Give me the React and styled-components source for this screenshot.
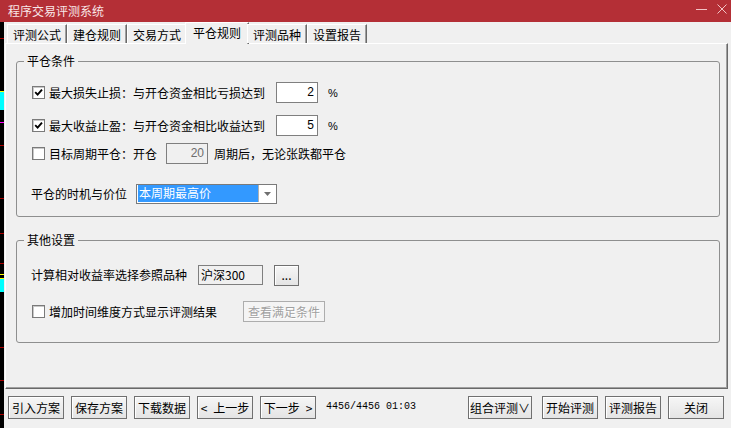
import React from 'react';
import styled, { createGlobalStyle } from 'styled-components';

const GlobalStyle = createGlobalStyle`
  html, body {
    margin: 0;
    padding: 0;
    background: #f0f0f0;
  }
  body {
    font-family: "Noto Sans CJK SC", "Noto Sans", sans-serif;
    font-size: 12px;
    color: #000;
  }
  * {
    box-sizing: border-box;
  }
`

const Window = styled.div`
  width: 731px;
  height: 428px;
  display: flex;
  flex-direction: column;
  overflow: hidden;
  background: #f0f0f0;
`

const TitleBar = styled.div`
  height: 22px;
  flex: none;
  display: flex;
  align-items: center;
  padding: 0 4px 0 8px;
  background: #b42f36;
`

const Title = styled.div`
  color: #f8e6e7;
  font-size: 12px;
  line-height: 16px;
`

const WinButtons = styled.div`
  margin-left: auto;
  display: flex;
  gap: 10px;
`

const Body = styled.div`
  flex: 1;
  display: flex;
`

// chart remnants peeking out from behind the dialog
const Strip = styled.div`
  width: 4px;
  flex: none;
  background: linear-gradient(
    #000 0, #000 16px, #a00 16px, #a00 17px, #000 17px,
    #000 69px, #ff0 69px, #ff0 70px, #0ff 70px, #0ff 88px, #000 88px,
    #000 100px, #f0f 100px, #f0f 101px, #000 101px,
    #000 123px, #a00 123px, #a00 124px, #000 124px,
    #000 176px, #a00 176px, #a00 177px, #000 177px,
    #000 211px, #a00 211px, #a00 212px, #000 212px,
    #000 241px, #a00 241px, #a00 242px, #000 242px,
    #000 252px, #ff0 252px, #ff0 253px, #000 253px,
    #000 256px, #ff0 256px, #ff0 257px, #0ff 257px, #0ff 270px, #000 270px,
    #000 325px, #a00 325px, #a00 326px, #000 326px,
    #000 358px, #a00 358px, #a00 359px, #000 359px,
    #000 392px, #a00 392px, #a00 393px, #000 393px
  );
`

const Main = styled.div`
  flex: 1;
  display: flex;
  flex-direction: column;
  min-width: 0;
`

const TabBar = styled.div`
  height: 21px;
  flex: none;
  display: flex;
  align-items: flex-end;
  padding-left: 3px;
  position: relative;
  z-index: 1;
`

const Tab = styled.div`
  width: ${p => (p.$active ? 64 : 60)}px;
  height: ${p => (p.$active ? 22 : 19)}px;
  margin: ${p => (p.$active ? '0 -2px -1px -2px' : '0')};
  padding: 2px 0 0 ${p => (p.$active ? 7 : 5)}px;
  line-height: 16px;
  background: #f0f0f0;
  border-top: 1px solid #fff;
  border-left: 1px solid #fff;
  border-right: 1px solid #696969;
  box-shadow: inset -1px 0 0 #a0a0a0;
  white-space: nowrap;
`

const Panel = styled.div`
  height: 346px;
  flex: none;
  margin: 0 3px 0 1px;
  padding-top: 9px;
  border-top: 1px solid #fff;
  border-left: 1px solid #fff;
  border-right: 1px solid #696969;
  border-bottom: 1px solid #696969;
  box-shadow: inset -1px -1px 0 #a0a0a0;
`

const Group = styled.fieldset`
  margin: ${p => p.$top || 0}px 7px 0 10px;
  padding: 0;
  min-width: 0;
  border: 1px solid #8e8f8f;
  border-radius: 3px;
`

const Legend = styled.legend`
  margin-left: 7px;
  padding: 0 3px;
  font-size: 12px;
  line-height: 16px;
`

const GroupBody = styled.div`
  padding: ${p => p.$pad};
`

const Row = styled.div`
  display: flex;
  align-items: center;
  height: ${p => p.$h || 21}px;
  margin-top: ${p => p.$mt || 0}px;
  margin-left: ${p => p.$ml || 0}px;
  line-height: 16px;
  white-space: nowrap;
`

const Box = styled.span`
  width: 13px;
  height: 13px;
  flex: none;
  margin-right: 4px;
  display: flex;
  align-items: center;
  justify-content: center;
  background: #fff;
  border: 1px solid #7a7a7a;
  box-shadow: inset 1px 1px 0 #c8c8c8;
`

const Field = styled.div`
  width: ${p => p.$w}px;
  height: ${p => p.$h || 21}px;
  flex: none;
  margin-left: ${p => p.$ml || 0}px;
  padding: 0 ${p => (p.$left ? 0 : 3)}px 0 ${p => (p.$left ? 2 : 0)}px;
  border: 1px solid #7f7f7f;
  background: ${p => (p.$bg ? p.$bg : '#fff')};
  color: ${p => (p.$dim ? '#6d6d6d' : '#000')};
  text-align: ${p => (p.$left ? 'left' : 'right')};
  font-family: ${p => (p.$left ? '"Noto Sans CJK SC", sans-serif' : '"Liberation Sans", Arial, sans-serif')};
  font-size: 12px;
  line-height: ${p => (p.$h || 21) - 2}px;
`

const Unit = styled.span`
  margin-left: 10px;
  font-family: "Liberation Sans", Arial, sans-serif;
  font-size: 11px;
`

const Text = styled.span`
  margin-left: ${p => p.$ml || 0}px;
`

const Combo = styled.div`
  width: 141px;
  height: 20px;
  flex: none;
  margin-left: 9px;
  padding: 0 0 1px 1px;
  display: flex;
  background: #fff;
  border: 1px solid #7a7a7a;
`

const ComboValue = styled.div`
  width: 120px;
  padding-left: 1px;
  background: #3399ff;
  color: #fff;
  line-height: 16px;
`

const ComboArrow = styled.div`
  flex: 1;
  display: flex;
  align-items: center;
  justify-content: center;
  border-left: 1px solid #b0b0b0;
`

const Button = styled.button`
  width: ${p => p.$w || 56}px;
  height: ${p => p.$h || 23}px;
  flex: none;
  margin: 0 ${p => (p.$mr === undefined ? 7 : p.$mr)}px 0 ${p => p.$ml || 0}px;
  padding: 0;
  border: 1px solid ${p => (p.disabled ? '#adadad' : '#707070')};
  border-radius: 0;
  background: ${p => (p.disabled ? '#f4f4f4' : 'linear-gradient(#f6f6f6, #e4e4e4)')};
  box-shadow: ${p => (p.disabled ? 'none' : 'inset 1px 1px 0 #fff')};
  color: ${p => (p.disabled ? '#a0a0a0' : '#000')};
  text-shadow: ${p => (p.disabled ? '1px 1px 0 #fff' : 'none')};
  font-family: "Noto Sans CJK SC", sans-serif;
  font-size: 12px;
  line-height: 16px;
  white-space: nowrap;
`

const Footer = styled.div`
  flex: 1;
  display: flex;
  align-items: flex-start;
  padding: 7px 7px 0 4px;
`

const Counter = styled.span`
  margin: 5px 0 0 3px;
  font-family: "Liberation Mono", "Courier New", monospace;
  font-size: 10px;
  line-height: 12px;
`

const Right = styled.div`
  margin-left: auto;
  display: flex;
`

function Check({ on }) {
  return (
    <Box>
      {on && (
        <svg width="9" height="9" viewBox="0 0 9 9">
          <path d="M1.2 4.2 L3.6 6.6 L8 1.6" fill="none" stroke="#000" strokeWidth="1.9" />
        </svg>
      )}
    </Box>
  );
}

const tabs = ['评测公式', '建仓规则', '交易方式', '平仓规则', '评测品种', '设置报告'];

export default function App() {
  return (
    <Window>
      <GlobalStyle />
      <TitleBar>
        <Title>程序交易评测系统</Title>
        <WinButtons>
          <svg width="11" height="22" viewBox="0 0 11 22">
            <line x1="0" y1="9.5" x2="11" y2="9.5" stroke="#f2c3c5" strokeWidth="1" />
          </svg>
          <svg width="10" height="22" viewBox="0 0 10 22">
            <path d="M0.5 4.5 L9.5 13.5 M9.5 4.5 L0.5 13.5" stroke="#f2c3c5" strokeWidth="1" />
          </svg>
        </WinButtons>
      </TitleBar>
      <Body>
        <Strip />
        <Main>
          <TabBar>
            {tabs.map(t => (
              <Tab key={t} $active={t === '平仓规则'}>{t}</Tab>
            ))}
          </TabBar>
          <Panel>
            <Group>
              <Legend>平仓条件</Legend>
              <GroupBody $pad="13px 0 12px 15px">
                <Row>
                  <Check on />
                  <Text>最大损失止损：与开仓资金相比亏损达到</Text>
                  <Field $w={42} $ml={11}>2</Field>
                  <Unit>%</Unit>
                </Row>
                <Row $mt={12}>
                  <Check on />
                  <Text>最大收益止盈：与开仓资金相比收益达到</Text>
                  <Field $w={42} $ml={11}>5</Field>
                  <Unit>%</Unit>
                </Row>
                <Row $mt={7}>
                  <Check />
                  <Text>目标周期平仓：开仓</Text>
                  <Field $w={42} $ml={9} $bg="#f0f0f0" $dim>20</Field>
                  <Text $ml={6}>周期后，无论张跌都平仓</Text>
                </Row>
                <Row $mt={20} $h={20} $ml={-1}>
                  <Text>平仓的时机与价位</Text>
                  <Combo>
                    <ComboValue>本周期最高价</ComboValue>
                    <ComboArrow>
                      <svg width="7" height="4" viewBox="0 0 7 4">
                        <polygon points="0,0 7,0 3.5,4" fill="#707070" />
                      </svg>
                    </ComboArrow>
                  </Combo>
                </Row>
              </GroupBody>
            </Group>
            <Group $top={15}>
              <Legend>其他设置</Legend>
              <GroupBody $pad="17px 0 20px 15px">
                <Row $h={20} $ml={-1}>
                  <Text>计算相对收益率选择参照品种</Text>
                  <Field $w={65} $h={20} $ml={11} $left $bg="#f0f0f0">沪深300</Field>
                  <Button $w={25} $h={21} $ml={11}>...</Button>
                </Row>
                <Row $mt={16}>
                  <Check />
                  <Text>增加时间维度方式显示评测结果</Text>
                  <Button $w={82} $h={21} $ml={26} disabled>查看满足条件</Button>
                </Row>
              </GroupBody>
            </Group>
          </Panel>
          <Footer>
            <Button>引入方案</Button>
            <Button>保存方案</Button>
            <Button>下载数据</Button>
            <Button>{'<\u2002上一步'}</Button>
            <Button>{'下一步\u2002>'}</Button>
            <Counter>4456/4456 01:03</Counter>
            <Right>
              <Button $w={64} $mr={10}>组合评测∨</Button>
              <Button>开始评测</Button>
              <Button>评测报告</Button>
              <Button $mr={0}>关闭</Button>
            </Right>
          </Footer>
        </Main>
      </Body>
    </Window>
  );
}
